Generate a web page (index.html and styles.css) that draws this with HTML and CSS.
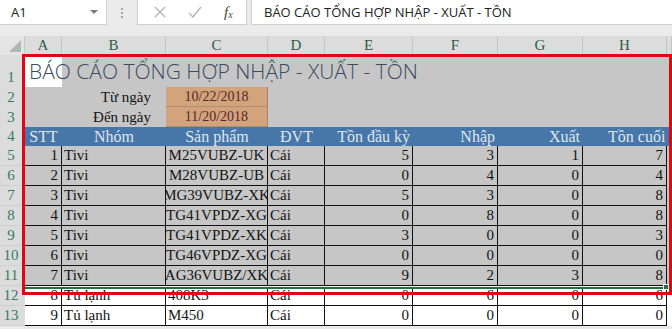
FILE: index.html
```html
<html>
	<head>
		<title>Báo cáo tồn kho</title>
		<meta charset="UTF-8">
		<link rel="stylesheet" href="styles.css">
	</head>
	<body>
		<div class="app">
			<div class="toolbar">
				<div class="namebox"><span>A1</span><span class="caret"></span></div>
				<div class="grip"><i></i><i></i><i></i></div>
				<div class="fxbox">
					<svg class="btn" width="16" height="16" viewBox="0 0 16 16"><path d="M3 3 L13 13 M13 3 L3 13" stroke="#b5b5b5" stroke-width="1.4" fill="none"/></svg>
					<svg class="btn" width="16" height="16" viewBox="0 0 16 16"><path d="M2 9 L6 13 L14 3" stroke="#b5b5b5" stroke-width="1.4" fill="none"/></svg>
					<span class="fx">f<sub>x</sub></span>
				</div>
				<div class="formula">BÁO CÁO TỔNG HỢP NHẬP - XUẤT - TỒN</div>
			</div>

			<div class="sheet">
				<div class="row colhead">
					<div class="corner"><span class="tri"></span></div>
					<div class="h">A</div><div class="h">B</div><div class="h">C</div><div class="h">D</div>
					<div class="h">E</div><div class="h">F</div><div class="h">G</div><div class="h">H</div><div class="h"></div>
				</div>

				<div class="row r1 sel">
					<div class="num">1</div>
					<div class="c active"><span class="title">BÁO CÁO TỔNG HỢP NHẬP - XUẤT - TỒN</span></div>
					<div class="c"></div><div class="c"></div><div class="c"></div><div class="c"></div>
					<div class="c"></div><div class="c"></div><div class="c"></div><div class="c"></div>
				</div>
				<div class="row sel">
					<div class="num">2</div>
					<div class="c"></div>
					<div class="c label">Từ ngày</div>
					<div class="c date">10/22/2018</div>
					<div class="c"></div><div class="c"></div><div class="c"></div><div class="c"></div><div class="c"></div><div class="c"></div>
				</div>
				<div class="row sel">
					<div class="num">3</div>
					<div class="c"></div>
					<div class="c label">Đến ngày</div>
					<div class="c date">11/20/2018</div>
					<div class="c"></div><div class="c"></div><div class="c"></div><div class="c"></div><div class="c"></div><div class="c"></div>
				</div>
				<div class="row head sel">
					<div class="num">4</div>
					<div class="c m">STT</div>
					<div class="c m">Nhóm</div>
					<div class="c m">Sản phẩm</div>
					<div class="c m">ĐVT</div>
					<div class="c r">Tồn đầu kỳ</div>
					<div class="c r">Nhập</div>
					<div class="c r">Xuất</div>
					<div class="c spill">Tồn cuối kỳ</div>
					<div class="c"></div>
				</div>

				<div class="row data sel">
					<div class="num">5</div>
					<div class="c r">1</div><div class="c l">Tivi</div><div class="c m">M25VUBZ-UK</div><div class="c l">Cái</div>
					<div class="c r">5</div><div class="c r">3</div><div class="c r">1</div><div class="c r">7</div><div class="c e"></div>
				</div>
				<div class="row data sel">
					<div class="num">6</div>
					<div class="c r">2</div><div class="c l">Tivi</div><div class="c m">M28VUBZ-UB</div><div class="c l">Cái</div>
					<div class="c r">0</div><div class="c r">4</div><div class="c r">0</div><div class="c r">4</div><div class="c e"></div>
				</div>
				<div class="row data sel">
					<div class="num">7</div>
					<div class="c r">3</div><div class="c l">Tivi</div><div class="c m">MG39VUBZ-XK</div><div class="c l">Cái</div>
					<div class="c r">5</div><div class="c r">3</div><div class="c r">0</div><div class="c r">8</div><div class="c e"></div>
				</div>
				<div class="row data sel">
					<div class="num">8</div>
					<div class="c r">4</div><div class="c l">Tivi</div><div class="c m">TG41VPDZ-XG</div><div class="c l">Cái</div>
					<div class="c r">0</div><div class="c r">8</div><div class="c r">0</div><div class="c r">8</div><div class="c e"></div>
				</div>
				<div class="row data sel">
					<div class="num">9</div>
					<div class="c r">5</div><div class="c l">Tivi</div><div class="c m">TG41VPDZ-XK</div><div class="c l">Cái</div>
					<div class="c r">3</div><div class="c r">0</div><div class="c r">0</div><div class="c r">3</div><div class="c e"></div>
				</div>
				<div class="row data sel">
					<div class="num">10</div>
					<div class="c r">6</div><div class="c l">Tivi</div><div class="c m">TG46VPDZ-XG</div><div class="c l">Cái</div>
					<div class="c r">0</div><div class="c r">0</div><div class="c r">0</div><div class="c r">0</div><div class="c e"></div>
				</div>
				<div class="row data sel">
					<div class="num">11</div>
					<div class="c r">7</div><div class="c l">Tivi</div><div class="c m">AG36VUBZ/XK</div><div class="c l">Cái</div>
					<div class="c r">9</div><div class="c r">2</div><div class="c r">3</div><div class="c r">8</div><div class="c e"></div>
				</div>
				<div class="row data">
					<div class="num">12</div>
					<div class="c r">8</div><div class="c l">Tủ lạnh</div><div class="c l">408K3</div><div class="c l">Cái</div>
					<div class="c r">0</div><div class="c r">6</div><div class="c r">0</div><div class="c r">6</div><div class="c e"></div>
				</div>
				<div class="row data">
					<div class="num">13</div>
					<div class="c r">9</div><div class="c l">Tủ lạnh</div><div class="c l">M450</div><div class="c l">Cái</div>
					<div class="c r">0</div><div class="c r">0</div><div class="c r">0</div><div class="c r">0</div><div class="c e"></div>
				</div>
			</div>

			<!-- selection edge and the red highlight frame drawn over the sheet -->
			<div class="sel-edge"></div>
			<div class="sel-handle"></div>
			<div class="frame"></div>
		</div>
	</body>
</html>
```

FILE: styles.css
```css
html, body {
	box-sizing: border-box;
	margin: 0;
	padding: 0;
	background: #ffffff;
	overflow: hidden;
}

*, *:before, *:after {
	box-sizing: inherit;
}

.app {
	position: relative;
	width: 672px;
	height: 329px;
	overflow: hidden;
	background: #e9e9e9;
}

/* formula bar */
.toolbar {
	display: flex;
	height: 36px;
	padding-bottom: 11px;
	background: #ebebeb;
	font-family: 'Open Sans', sans-serif;
	color: #222;
}

.namebox {
	display: flex;
	align-items: center;
	justify-content: space-between;
	width: 107px;
	padding: 0 8px 0 11px;
	background: #fff;
	border: 1px solid #d0d0d0;
	border-top: none;
	border-left: none;
	font-size: 13px;
}

.caret {
	width: 0;
	height: 0;
	border-left: 4px solid transparent;
	border-right: 4px solid transparent;
	border-top: 4px solid #7a7a7a;
}

.grip {
	display: flex;
	flex-direction: column;
	align-items: center;
	justify-content: center;
	gap: 2px;
	width: 30px;
}

.grip i {
	display: block;
	width: 2px;
	height: 2px;
	background: #a8a8a8;
}

.fxbox {
	display: flex;
	align-items: center;
	gap: 19px;
	width: 110px;
	padding-left: 14px;
	background: #fff;
	border: 1px solid #d0d0d0;
	border-top: none;
}

.fx {
	margin-left: 2px;
	font-family: 'Liberation Serif', serif;
	font-style: italic;
	font-size: 15px;
	color: #444;
}

.fx sub {
	font-size: 10px;
	vertical-align: -1px;
}

.formula {
	flex: 1;
	display: flex;
	align-items: center;
	margin-left: 4px;
	padding-left: 12px;
	background: #fff;
	border-left: 1px solid #d0d0d0;
	border-bottom: 1px solid #d0d0d0;
	font-size: 13px;
}

/* sheet grid */
.sheet {
	font-family: 'Liberation Serif', serif;
	font-size: 15px;
	color: #141414;
	background: #fff;
}

.row {
	display: grid;
	grid-template-columns: 25px 37px 104px 102px 57px 88px 85px 85px 84px 5px;
	height: 20px;
}

.colhead {
	height: 19px;
	background: #dcdcdc;
}

.corner {
	position: relative;
	background: #e4e4e4;
	border-right: 1px solid #c8c8c8;
}

.tri {
	position: absolute;
	right: 3px;
	bottom: 3px;
	width: 0;
	height: 0;
	border-left: 12px solid transparent;
	border-bottom: 12px solid #b4b4b4;
}

.h {
	display: flex;
	align-items: center;
	justify-content: center;
	border-right: 1px solid #c4c4c4;
	color: #2d5c48;
	font-size: 15px;
}

.num {
	display: flex;
	align-items: flex-end;
	justify-content: center;
	padding-right: 3px;
	background: #dcdcdc;
	color: #3b7a5b;
	font-size: 15px;
	line-height: 19px;
}

.c {
	display: flex;
	align-items: flex-end;
	overflow: hidden;
	white-space: nowrap;
	line-height: 19px;
}

.sel .c {
	background: #c6c6c6;
}

.r1 {
	height: 32px;
}

.c.active {
	overflow: visible;
	background: #fff;
	padding: 0 0 4px 4px;
}

.title {
	position: relative;
	z-index: 1;
	font-family: 'Open Sans', sans-serif;
	font-weight: 300;
	font-size: 21px;
	line-height: 24px;
	color: #3d4b60;
}

.label {
	justify-content: flex-end;
	padding-right: 15px;
}

.c.date {
	justify-content: center;
	background: #d3a37b;
	border-right: 1px solid #a98563;
	border-bottom: 1px solid #b08d6c;
	font-size: 14px;
	color: #55282a;
}

.row.head {
	height: 19px;
}

.head .c {
	background: #4776a8;
	color: #dfe6ee;
	font-size: 16px;
}

.head .c.spill {
	padding-left: 25px;
}

.data .c {
	border-right: 1px solid #111;
	border-bottom: 1px solid #111;
}

.data .c.e {
	border: none;
}

.data .num {
	border-bottom: 1px solid #cfcfcf;
}

.m {
	justify-content: center;
}

.r {
	justify-content: flex-end;
	padding-right: 3px;
}

.l {
	padding-left: 2px;
}

.data:not(.sel) .c {
	background: #fff;
}

/* overlays */
.sel-edge {
	position: absolute;
	left: 25px;
	top: 286px;
	width: 642px;
	height: 3px;
	border-top: 1px solid #eef4ef;
	background: #2d6b48;
}

.sel-handle {
	position: absolute;
	left: 663px;
	top: 284px;
	width: 6px;
	height: 6px;
	background: #2d6b48;
	border: 1px solid #fff;
}

.frame {
	position: absolute;
	left: 22px;
	top: 54px;
	width: 650px;
	height: 241px;
	border: 3px solid #e2070e;
}
```
